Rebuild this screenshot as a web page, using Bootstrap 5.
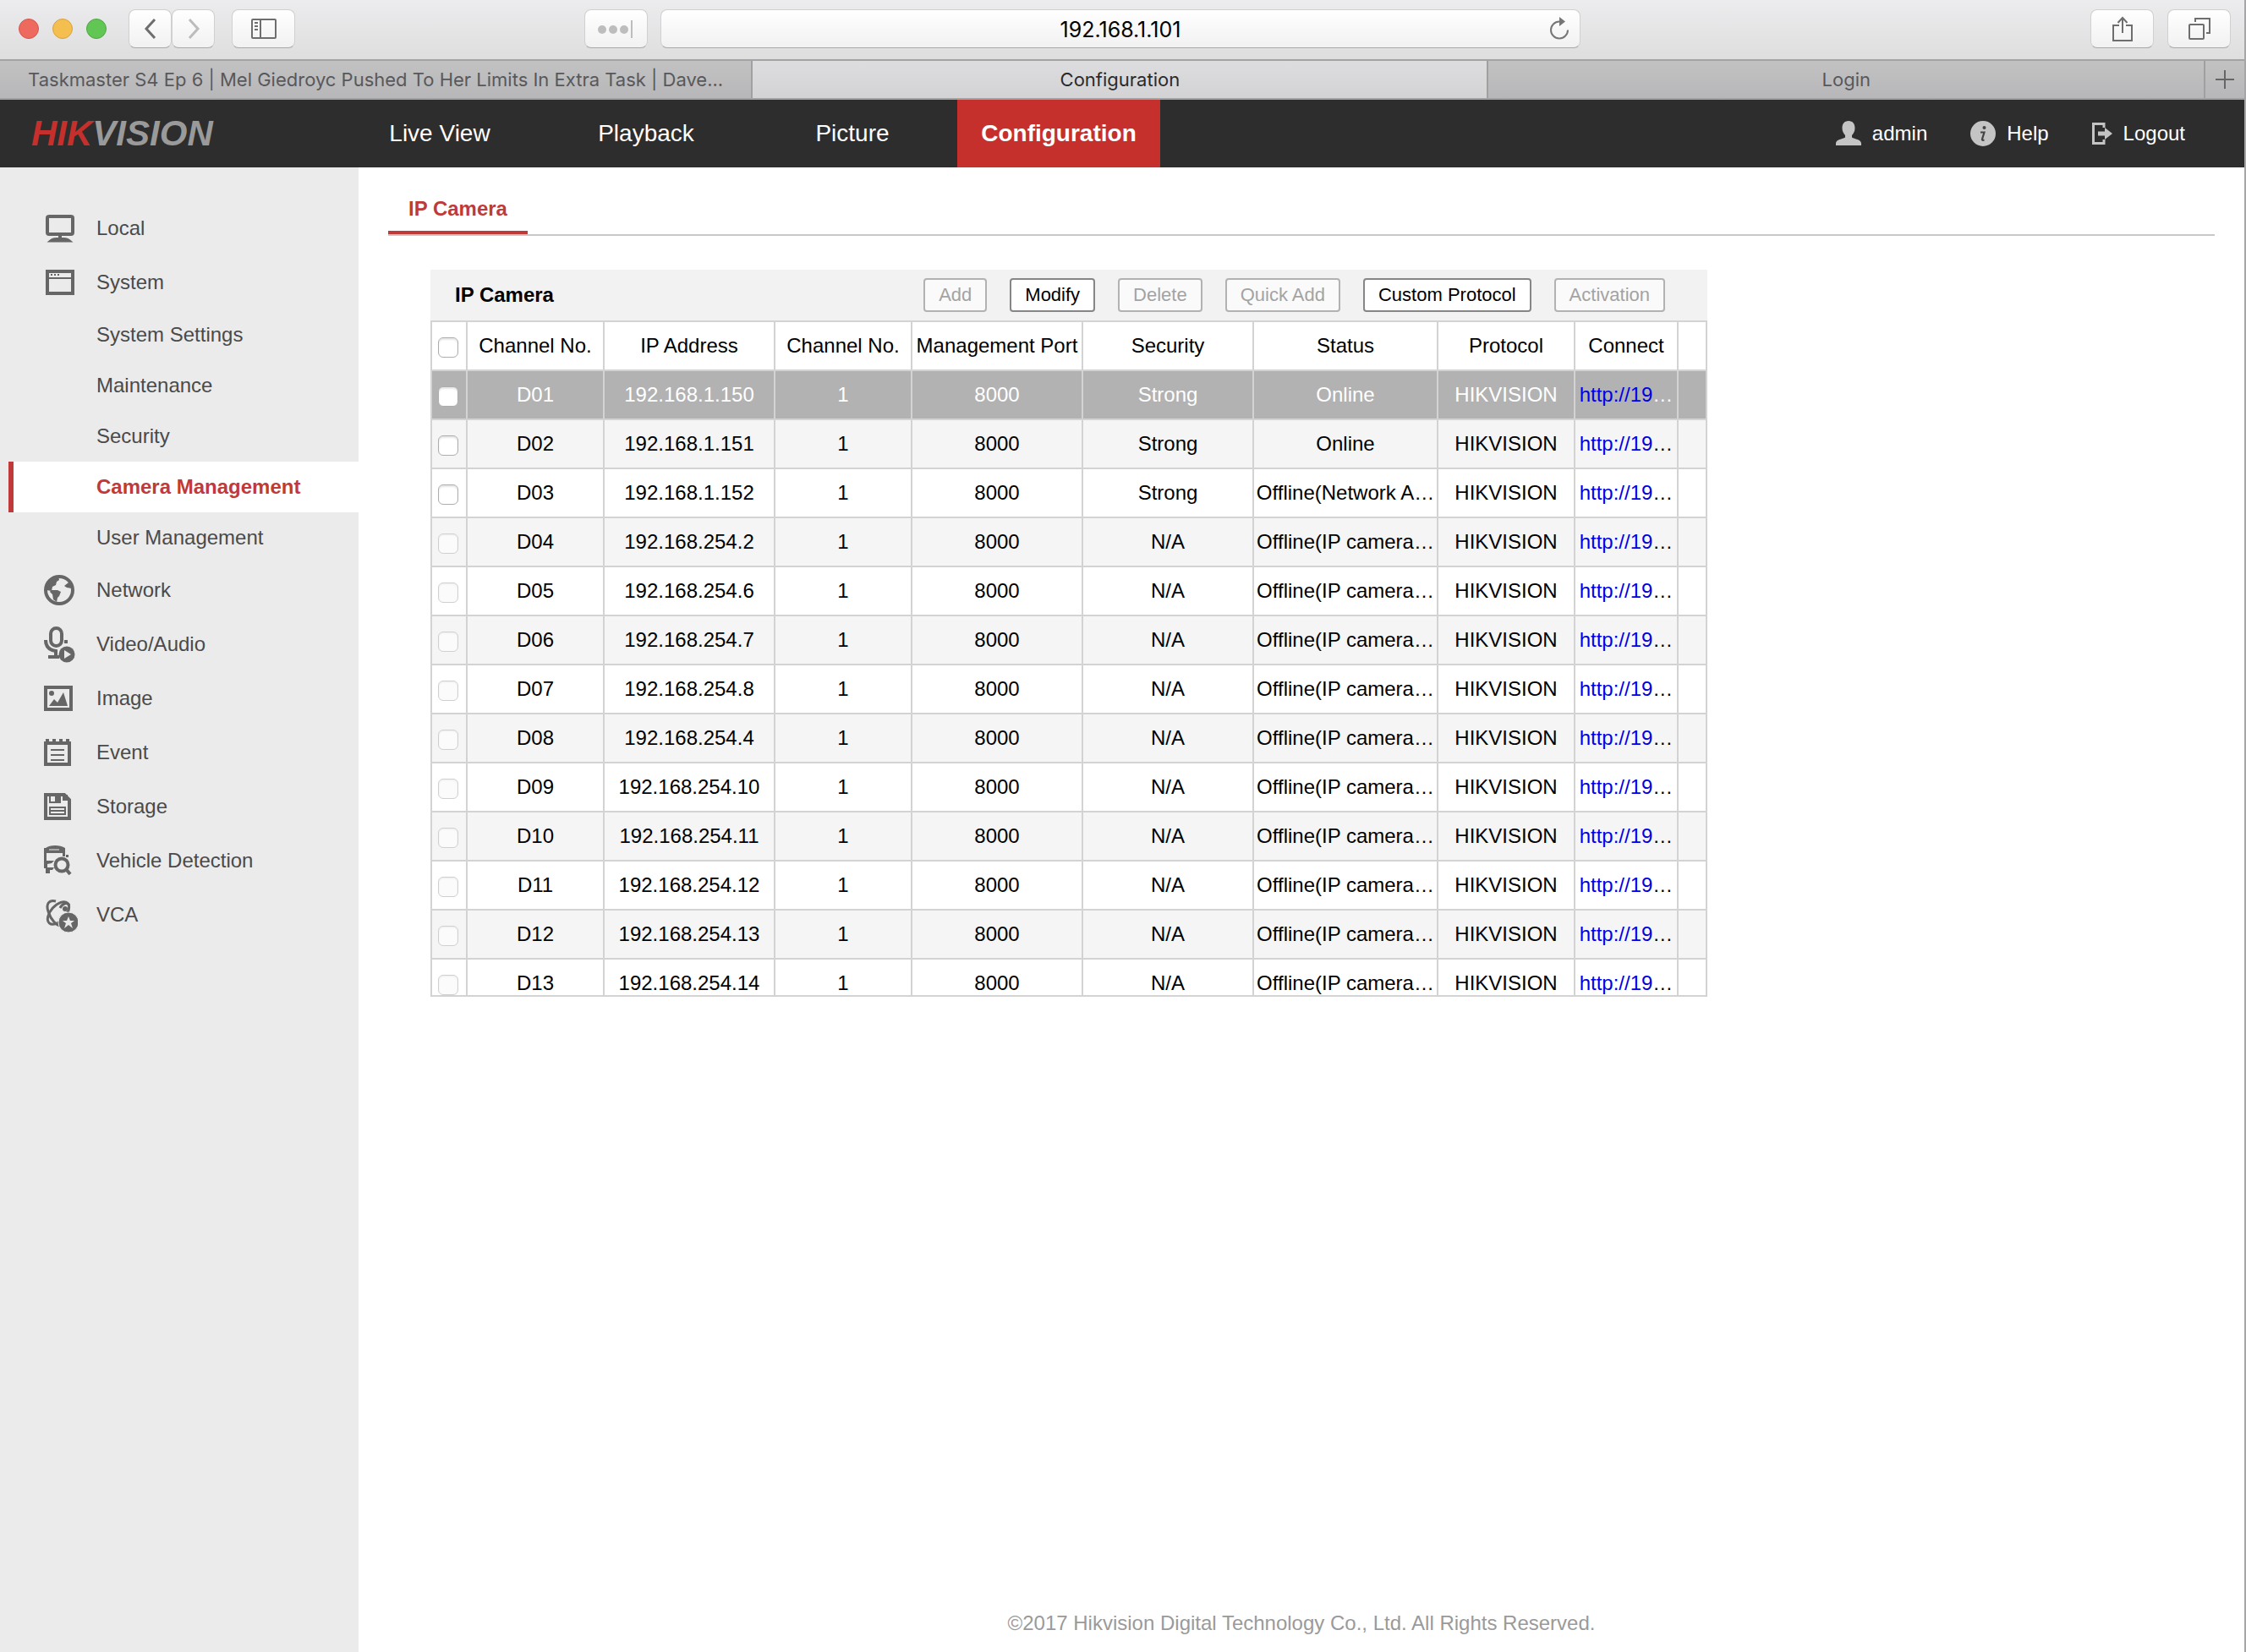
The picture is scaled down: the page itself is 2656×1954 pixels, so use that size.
<!DOCTYPE html>
<html lang="en">
<head>
<meta charset="utf-8">
<meta name="viewport" content="width=device-width, initial-scale=1">
<title>Configuration</title>
<link href="https://cdn.jsdelivr.net/npm/bootstrap@5.3.0/dist/css/bootstrap.min.css" rel="stylesheet">
<style>
  body { font-family: "Liberation Sans", Arial, sans-serif; font-size: 24px; line-height: 28px; color: #000; background: #fff; }
  a { text-decoration: none; color: inherit; }
  svg { display: block; flex: none; }
  .app-window { border-right: 2px solid #a6a6a6; }

  /* browser toolbar */
  .browser-bar { height: 70px; padding: 0 16px 2px; gap: 15px; background: linear-gradient(#ececee, #dededf); font-family: Inter, Roboto, sans-serif; }
  .browser-side { flex: 1 1 0; min-width: 0; }
  .browser-side.side-end { flex-basis: 4px; }
  .lights { gap: 16px; padding-left: 6px; margin-right: 26px; }
  .light { width: 24px; height: 24px; border-radius: 50%; border: 1px solid; padding: 0; }
  .light-red { background: #ee6a5f; border-color: #d5564b; }
  .light-yellow { background: #f5bf4f; border-color: #d8a13c; }
  .light-green { background: #61c654; border-color: #4fa73f; }
  .tool { height: 46px; width: 75px; padding: 0; display: flex; align-items: center; justify-content: center; border: 1px solid #d0d0d1; border-bottom-color: #a9a9aa; border-radius: 8px; background: linear-gradient(#fff, #f1f1f1); }
  .tool-narrow { width: 51px; }
  .tool-side { margin-left: 20px; }
  .address { flex: 0 0 41.5%; height: 46px; border: 1px solid #d0d0d1; border-bottom-color: #a9a9aa; border-radius: 8px; background: linear-gradient(#fff, #f1f1f1); padding: 0 12px 0 36px; }
  .address input { border: 0; background: none; text-align: center; font-size: 25px; line-height: 28px; color: #000; min-width: 0; padding: 2px 0 0; }
  .address button { border: 0; background: none; padding: 0; }
  .tab-strip { height: 48px; border-top: 2px solid #a3a3a4; border-bottom: 2px solid #a0a1a1; background: linear-gradient(#c2c2c3, #b7b7b9); font-family: Inter, Roboto, sans-serif; font-size: 22px; color: #58585a; }
  .page-tab { flex: 1 1 0; min-width: 0; padding: 0 30px; border-right: 2px solid #a0a0a1; display: flex; align-items: center; justify-content: center; white-space: nowrap; overflow: hidden; }
  .page-tab.first { flex-grow: 1.025; }
  .page-tab.last { flex-grow: .972; }
  .page-tab.current { background: linear-gradient(#dddddf, #d3d3d5); color: #2a2a2b; }
  .tab-new { width: 46px; border: 0; background: none; padding: 0; display: flex; align-items: center; justify-content: center; }

  /* product header */
  .top-nav { height: 80px; background: #2d2d2d; color: #fff; padding-right: 70px; }
  .brand-area { width: 400px; padding-left: 37px; font-size: 42px; line-height: 48px; font-weight: 700; font-style: italic; color: #9a9a9a; }
  .brand-area span { color: #c5302c; }
  .main-links { gap: 4px; font-size: 28px; }
  .main-links a { width: 240px; display: flex; align-items: center; justify-content: center; color: #fff; }
  .main-links a.active { background: #c5302c; font-weight: 700; }
  .user-links { gap: 51px; }
  .user-links a { display: flex; align-items: center; gap: 13px; color: #fff; }

  /* sidebar */
  .side-menu { width: 424px; flex: none; padding-top: 40px; background: #ebebeb; color: #4a4a4a; }
  .side-item { height: 64px; padding-left: 52px; display: flex; align-items: center; gap: 22px; }
  .side-sub { height: 60px; margin-left: 10px; padding-left: 104px; display: flex; align-items: center; }
  .side-sub.active { border-left: 6px solid #bf3a38; padding-left: 98px; background: #fff; color: #bf3a38; font-weight: 700; }

  /* content */
  .content-area { padding: 28px 35px 20px; min-width: 0; }
  .page-tabs { border-bottom: 2px solid #c8c8c8; }
  .page-tabs a { padding: 7px 24px 12px; height: 51px; line-height: 28px; border-bottom: 4px solid #bf3a38; color: #bf3a38; font-weight: 700; }
  .camera-panel { width: 1510px; max-width: 100%; margin: 40px 0 0 50px; }
  .panel-bar { height: 60px; padding: 0 50px 0 29px; background: #f2f2f2; }
  .panel-bar h1 { font-size: 24px; line-height: 28px; font-weight: 700; }
  .panel-actions { gap: 27px; }
  .act { height: 40px; padding: 0 16px; border: 2px solid #868686; border-radius: 4px; background: #fff; color: #000; font-size: 22px; line-height: 28px; }
  .act:disabled { border-color: #b2b2b2; background: #fafafa; color: #a3a3a3; }
  .grid-box { height: 800px; border: 2px solid #d3d3d3; border-right: 0; overflow: hidden; }
  .cam-grid { table-layout: fixed; width: 100%; border-collapse: separate; border-spacing: 0; text-align: center; }
  .cam-grid th, .cam-grid td { height: 58px; padding: 0; font-weight: 400; vertical-align: middle; white-space: nowrap; overflow: hidden; border: 0 solid #d3d3d3; border-width: 0 2px 2px 0; }
  .cam-grid tbody tr:nth-child(even) { background: #f5f5f5; }
  .cam-grid tbody tr.picked { background: #b2b2b2; color: #fff; }
  .cam-grid a { color: #0000e8; }
  .cam-grid input { appearance: none; display: block; width: 24px; height: 24px; margin: 4px 0 0 7px; border: 1px solid #adadad; border-radius: 6px; background: #fff; box-shadow: inset 0 2px 2px #e6e6e6; }
  .cam-grid input:disabled { border-color: #d0d0d0; background: #fbfbfb; box-shadow: inset 0 1px 2px #ececec; }
  .legal { color: #9a9a9a; }
</style>
<script src="https://cdn.jsdelivr.net/npm/bootstrap@5.3.0/dist/js/bootstrap.bundle.min.js"></script>
</head>
<body>
<div class="app-window d-flex flex-column min-vh-100">

  <div class="browser-bar d-flex align-items-center">
    <div class="browser-side d-flex align-items-center">
      <div class="lights d-flex">
        <button class="light light-red" aria-label="Close"></button>
        <button class="light light-yellow" aria-label="Minimise"></button>
        <button class="light light-green" aria-label="Zoom"></button>
      </div>
      <button class="tool tool-narrow" aria-label="Back"><svg width="16" height="26" viewBox="0 0 16 26" fill="none" stroke="#6e6e6e" stroke-width="3"><path d="M13 2 3 13l10 11"/></svg></button>
      <button class="tool tool-narrow" aria-label="Forward"><svg width="16" height="26" viewBox="0 0 16 26" fill="none" stroke="#bcbcbc" stroke-width="3"><path d="m3 2 10 11L3 24"/></svg></button>
      <button class="tool tool-side" aria-label="Sidebar"><svg width="30" height="24" viewBox="0 0 30 24" fill="none" stroke="#6e6e6e" stroke-width="2"><rect x="1" y="1" width="28" height="22" rx="1"/><path d="M11 1v22M4 5h4M4 9h4M4 13h4"/></svg></button>
      <button class="tool ms-auto" aria-label="Reader"><svg width="44" height="22" viewBox="0 0 44 22" fill="#bdbdbd"><circle cx="6" cy="12" r="5"/><circle cx="19" cy="12" r="5"/><circle cx="32" cy="12" r="5"/><path d="M40 1h2v21h-2z"/></svg></button>
    </div>
    <div class="address d-flex align-items-center">
      <input class="flex-grow-1" type="text" value="192.168.1.101" aria-label="Address">
      <button aria-label="Reload"><svg width="24" height="28" viewBox="0 0 24 28" fill="none" stroke="#767676" stroke-width="2"><path d="M12 5.500a10 10 0 1 0 10 10"/><path d="M12 0v11l7-5.500z" fill="#767676" stroke="none"/></svg></button>
    </div>
    <div class="browser-side side-end d-flex align-items-center justify-content-end gap-3">
      <button class="tool" aria-label="Share"><svg width="24" height="30" viewBox="0 0 24 30" fill="none" stroke="#6e6e6e" stroke-width="2"><path d="M8 11H1v18h22V11h-7M12 20V2M6.500 8 12 2l5.500 6"/></svg></button>
      <button class="tool" aria-label="Tabs"><svg width="26" height="26" viewBox="0 0 26 26" fill="none" stroke="#6e6e6e" stroke-width="2"><rect x="1" y="8" width="17" height="17" rx="1"/><path d="M8 5V1h17v17h-4"/></svg></button>
    </div>
  </div>

  <div class="tab-strip d-flex">
    <a class="page-tab first" href="#">Taskmaster S4 Ep 6 | Mel Giedroyc Pushed To Her Limits In Extra Task | Dave...</a>
    <a class="page-tab current" href="#">Configuration</a>
    <a class="page-tab last" href="#">Login</a>
    <button class="tab-new" aria-label="New tab"><svg width="22" height="22" viewBox="0 0 22 22" stroke="#666" stroke-width="2"><path d="M11 0v22M0 11h22"/></svg></button>
  </div>

  <header class="top-nav d-flex">
    <div class="brand-area d-flex align-items-center"><span>HIK</span>VISION</div>
    <nav class="main-links d-flex">
      <a href="#">Live View</a>
      <a href="#">Playback</a>
      <a href="#">Picture</a>
      <a class="active" href="#">Configuration</a>
    </nav>
    <div class="user-links d-flex align-items-center ms-auto">
      <a href="#"><svg width="30" height="30" viewBox="0 0 30 30" fill="#c4c4c4"><path d="M15 0c5 0 7.500 3.500 7.500 8.500 0 4-1.500 6-3.500 8.500v2.500c3 2 11 2.500 11 7V29H0v-2.500c0-4.500 8-5 11-7V17C9 14.500 7.500 12.500 7.500 8.500 7.500 3.500 10 0 15 0z"/></svg>admin</a>
      <a href="#"><svg width="30" height="30" viewBox="0 0 30 30"><circle cx="15" cy="15" r="15" fill="#c4c4c4"/><circle cx="16.500" cy="8" r="2" fill="#444"/><path d="M12 13.500h4.500l-2.500 8q-.5 2 2.500 1" fill="none" stroke="#444" stroke-width="2.200"/></svg>Help</a>
      <a href="#"><svg width="24" height="26" viewBox="0 0 24 26" fill="none" stroke="#c4c4c4" stroke-width="3"><path d="M14 6V1.500H1.500v23H14V20"/><path d="M7 10.500h8V6l9 7-9 7v-4.500H7z" fill="#c4c4c4" stroke="none"/></svg>Logout</a>
    </div>
  </header>

  <div class="d-flex flex-grow-1">
    <nav class="side-menu">
      <a class="side-item" href="#"><svg width="40" height="44" viewBox="0 0 40 44" fill="none" stroke="#666" stroke-width="4"><rect x="4" y="8" width="30" height="21" rx="2"/><path d="M19 30v5M9 36.500c3-2.500 17-2.500 20 0z"/></svg>Local</a>
      <a class="side-item" href="#"><svg width="40" height="44" viewBox="0 0 40 44" fill="none" stroke="#666"><rect x="4" y="9" width="30" height="26" stroke-width="4"/><path d="M5 17h28" stroke-width="2"/><path d="M8 13h2m2 0h2m2 0h2" stroke-width="2"/></svg>System</a>
      <a class="side-sub" href="#">System Settings</a>
      <a class="side-sub" href="#">Maintenance</a>
      <a class="side-sub" href="#">Security</a>
      <a class="side-sub active" href="#">Camera Management</a>
      <a class="side-sub" href="#">User Management</a>
      <a class="side-item" href="#"><svg width="40" height="44" viewBox="0 0 40 44" fill="#666"><circle cx="18" cy="22" r="16" fill="none" stroke="#666" stroke-width="4"/><path d="M4 16c2-6 7-10 13-11l1 5-3 2-1 4-4 2-1 5-6-1zM8 22h8l4 2-2 5-2 2-1 5-4-3-1-6-3-3zM24 17l5-4 4 2v5l-6-1z"/></svg>Network</a>
      <a class="side-item" href="#"><svg width="40" height="44" viewBox="0 0 40 44" fill="none" stroke="#666" stroke-width="4"><rect x="8" y="3" width="13" height="21" rx="6.500"/><path d="M2 17c0 8 4 12 12 13v5M5 37h13"/><path d="M24 17h4v4h-4z" fill="#666" stroke="none"/><circle cx="27" cy="34" r="9.500" fill="#666" stroke="none"/><path d="m24 29 8 5-8 5z" fill="#ebebeb" stroke="none"/></svg>Video/Audio</a>
      <a class="side-item" href="#"><svg width="40" height="44" viewBox="0 0 40 44" fill="#666"><rect x="2" y="9" width="30" height="26" fill="none" stroke="#666" stroke-width="4"/><circle cx="9" cy="16" r="3"/><path d="m6 31 6-8 4 4 7-12 5 16z"/></svg>Image</a>
      <a class="side-item" href="#"><svg width="40" height="44" viewBox="0 0 40 44" fill="none" stroke="#666"><path d="M2 11h28v25H2zM4 6v5M12 6v5M20 6v5M28 6v5" stroke-width="4"/><path d="M8 19h16M8 25h16M8 31h16" stroke-width="2"/></svg>Event</a>
      <a class="side-item" href="#"><svg width="40" height="44" viewBox="0 0 40 44" fill="none" stroke="#666"><path d="M2 8h22l6 6v22H2z" stroke-width="4"/><path d="M7 9v8h12V9M7 23h18v8H7zM7 27h18" stroke-width="2"/><path d="M13 8h7v10h-7zM22 8h6v7h-6z" fill="#666" stroke="none"/></svg>Storage</a>
      <a class="side-item" href="#"><svg width="40" height="44" viewBox="0 0 40 44" fill="#666"><path d="M2 7c5-4 17-4 23 0v10h-3v-4H3v9h9l-3 3-5 1v4h8l-2 3H7v4H2v-6H0V7z"/><path d="M6 9h12" stroke="#ebebeb"/><circle cx="21" cy="27" r="7.500" fill="none" stroke="#666" stroke-width="4"/><path d="m26 32 5 6" stroke="#666" stroke-width="4"/><path d="M26 15h3v3h-3z"/></svg>Vehicle Detection</a>
      <a class="side-item" href="#"><svg width="40" height="44" viewBox="0 0 40 44" fill="none" stroke="#666"><g stroke-width="3"><ellipse cx="17" cy="20" rx="16" ry="9" transform="rotate(-48 17 20)"/><path d="M14 6C6 4 2 9 5 18c3 10 10 17 15 17M19 14c3-6 9-7 11-3"/></g><circle cx="25" cy="15" r="3" fill="#666" stroke="none"/><circle cx="29" cy="31" r="12" fill="#666" stroke="#ebebeb"/><path d="m29 24 2 5h5l-4 3 2 6-5-4-5 4 2-6-4-3h5z" fill="#ebebeb" stroke="none"/></svg>VCA</a>
    </nav>

    <main class="content-area flex-grow-1 d-flex flex-column">
      <nav class="page-tabs d-flex"><a href="#">IP Camera</a></nav>

      <section class="camera-panel">
        <div class="panel-bar d-flex align-items-center">
          <h1 class="m-0 me-auto">IP Camera</h1>
          <div class="panel-actions d-flex">
            <button class="act" disabled>Add</button>
            <button class="act">Modify</button>
            <button class="act" disabled>Delete</button>
            <button class="act" disabled>Quick Add</button>
            <button class="act">Custom Protocol</button>
            <button class="act" disabled>Activation</button>
          </div>
        </div>
        <div class="grid-box">
          <table class="cam-grid">
            <colgroup><col style="width:42px"><col style="width:162px"><col style="width:202px"><col style="width:162px"><col style="width:202px"><col style="width:202px"><col style="width:218px"><col style="width:162px"><col style="width:122px"><col style="width:34px"></colgroup>
            <thead>
              <tr><th><input type="checkbox" aria-label="Select all"></th><th>Channel No.</th><th>IP Address</th><th>Channel No.</th><th>Management Port</th><th>Security</th><th>Status</th><th>Protocol</th><th>Connect</th><th></th></tr>
            </thead>
            <tbody>
              <tr class="picked"><td><input type="checkbox" aria-label="D01"></td><td>D01</td><td>192.168.1.150</td><td>1</td><td>8000</td><td>Strong</td><td>Online</td><td>HIKVISION</td><td><a href="#">http://19</a>…</td><td></td></tr>
              <tr><td><input type="checkbox" aria-label="D02"></td><td>D02</td><td>192.168.1.151</td><td>1</td><td>8000</td><td>Strong</td><td>Online</td><td>HIKVISION</td><td><a href="#">http://19</a>…</td><td></td></tr>
              <tr><td><input type="checkbox" aria-label="D03"></td><td>D03</td><td>192.168.1.152</td><td>1</td><td>8000</td><td>Strong</td><td>Offline(Network A…</td><td>HIKVISION</td><td><a href="#">http://19</a>…</td><td></td></tr>
              <tr><td><input type="checkbox" disabled aria-label="D04"></td><td>D04</td><td>192.168.254.2</td><td>1</td><td>8000</td><td>N/A</td><td>Offline(IP camera…</td><td>HIKVISION</td><td><a href="#">http://19</a>…</td><td></td></tr>
              <tr><td><input type="checkbox" disabled aria-label="D05"></td><td>D05</td><td>192.168.254.6</td><td>1</td><td>8000</td><td>N/A</td><td>Offline(IP camera…</td><td>HIKVISION</td><td><a href="#">http://19</a>…</td><td></td></tr>
              <tr><td><input type="checkbox" disabled aria-label="D06"></td><td>D06</td><td>192.168.254.7</td><td>1</td><td>8000</td><td>N/A</td><td>Offline(IP camera…</td><td>HIKVISION</td><td><a href="#">http://19</a>…</td><td></td></tr>
              <tr><td><input type="checkbox" disabled aria-label="D07"></td><td>D07</td><td>192.168.254.8</td><td>1</td><td>8000</td><td>N/A</td><td>Offline(IP camera…</td><td>HIKVISION</td><td><a href="#">http://19</a>…</td><td></td></tr>
              <tr><td><input type="checkbox" disabled aria-label="D08"></td><td>D08</td><td>192.168.254.4</td><td>1</td><td>8000</td><td>N/A</td><td>Offline(IP camera…</td><td>HIKVISION</td><td><a href="#">http://19</a>…</td><td></td></tr>
              <tr><td><input type="checkbox" disabled aria-label="D09"></td><td>D09</td><td>192.168.254.10</td><td>1</td><td>8000</td><td>N/A</td><td>Offline(IP camera…</td><td>HIKVISION</td><td><a href="#">http://19</a>…</td><td></td></tr>
              <tr><td><input type="checkbox" disabled aria-label="D10"></td><td>D10</td><td>192.168.254.11</td><td>1</td><td>8000</td><td>N/A</td><td>Offline(IP camera…</td><td>HIKVISION</td><td><a href="#">http://19</a>…</td><td></td></tr>
              <tr><td><input type="checkbox" disabled aria-label="D11"></td><td>D11</td><td>192.168.254.12</td><td>1</td><td>8000</td><td>N/A</td><td>Offline(IP camera…</td><td>HIKVISION</td><td><a href="#">http://19</a>…</td><td></td></tr>
              <tr><td><input type="checkbox" disabled aria-label="D12"></td><td>D12</td><td>192.168.254.13</td><td>1</td><td>8000</td><td>N/A</td><td>Offline(IP camera…</td><td>HIKVISION</td><td><a href="#">http://19</a>…</td><td></td></tr>
              <tr><td><input type="checkbox" disabled aria-label="D13"></td><td>D13</td><td>192.168.254.14</td><td>1</td><td>8000</td><td>N/A</td><td>Offline(IP camera…</td><td>HIKVISION</td><td><a href="#">http://19</a>…</td><td></td></tr>
            </tbody>
          </table>
        </div>
      </section>

      <footer class="legal text-center mt-auto">©2017 Hikvision Digital Technology Co., Ltd. All Rights Reserved.</footer>
    </main>
  </div>
</div>
</body>
</html>
